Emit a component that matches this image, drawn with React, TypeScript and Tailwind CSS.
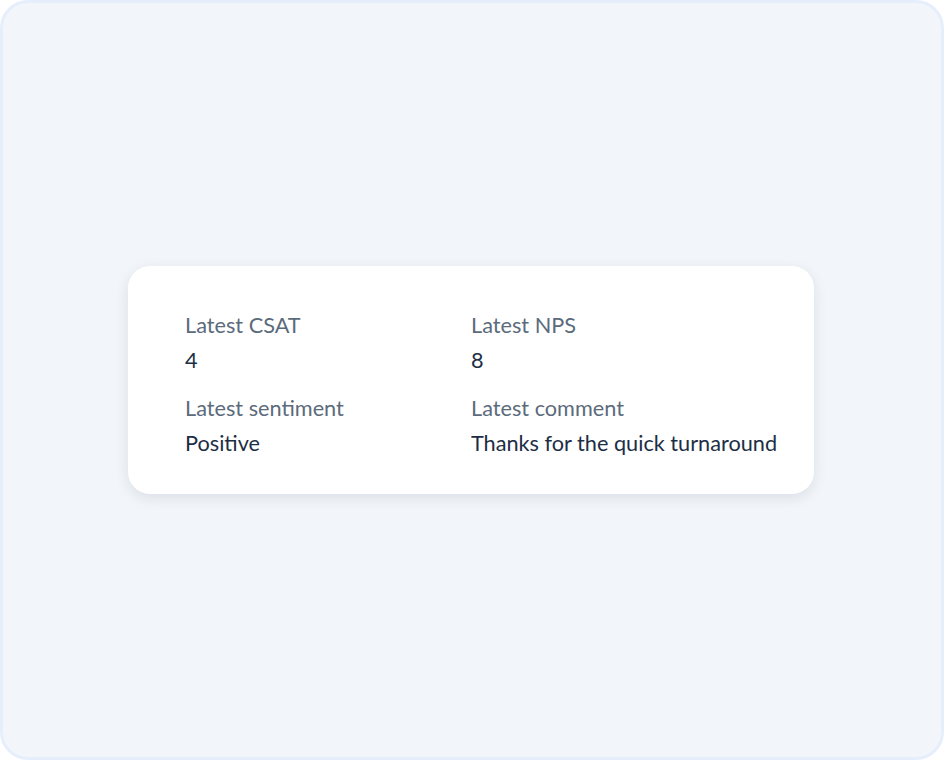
const fields = [
  { label: "Latest CSAT", value: "4" },
  { label: "Latest NPS", value: "8" },
  { label: "Latest sentiment", value: "Positive" },
  { label: "Latest comment", value: "Thanks for the quick turnaround" },
];

export default function App() {
  return (
    <div
      className="flex h-[760px] w-[944px] items-center justify-center rounded-[28px] border-[3px] border-[#e6eefc] bg-[#f2f6fa]"
      style={{ fontFamily: "Lato, 'Noto Sans', sans-serif" }}
    >
      <div className="-ml-[2px] grid w-[686px] grid-cols-2 gap-y-[20px] rounded-[22px] bg-white px-[57px] pt-[45px] pb-[37px] shadow-[0_4px_14px_rgba(15,30,60,0.10)]">
        {fields.map((f) => (
          <div key={f.label} className="whitespace-nowrap">
            <div className="text-[21.7px] leading-[28px] text-[#5b6b7c]">{f.label}</div>
            <div className="mt-[7px] text-[21.7px] leading-[28px] text-[#1c2e45]">{f.value}</div>
          </div>
        ))}
      </div>
    </div>
  );
}
